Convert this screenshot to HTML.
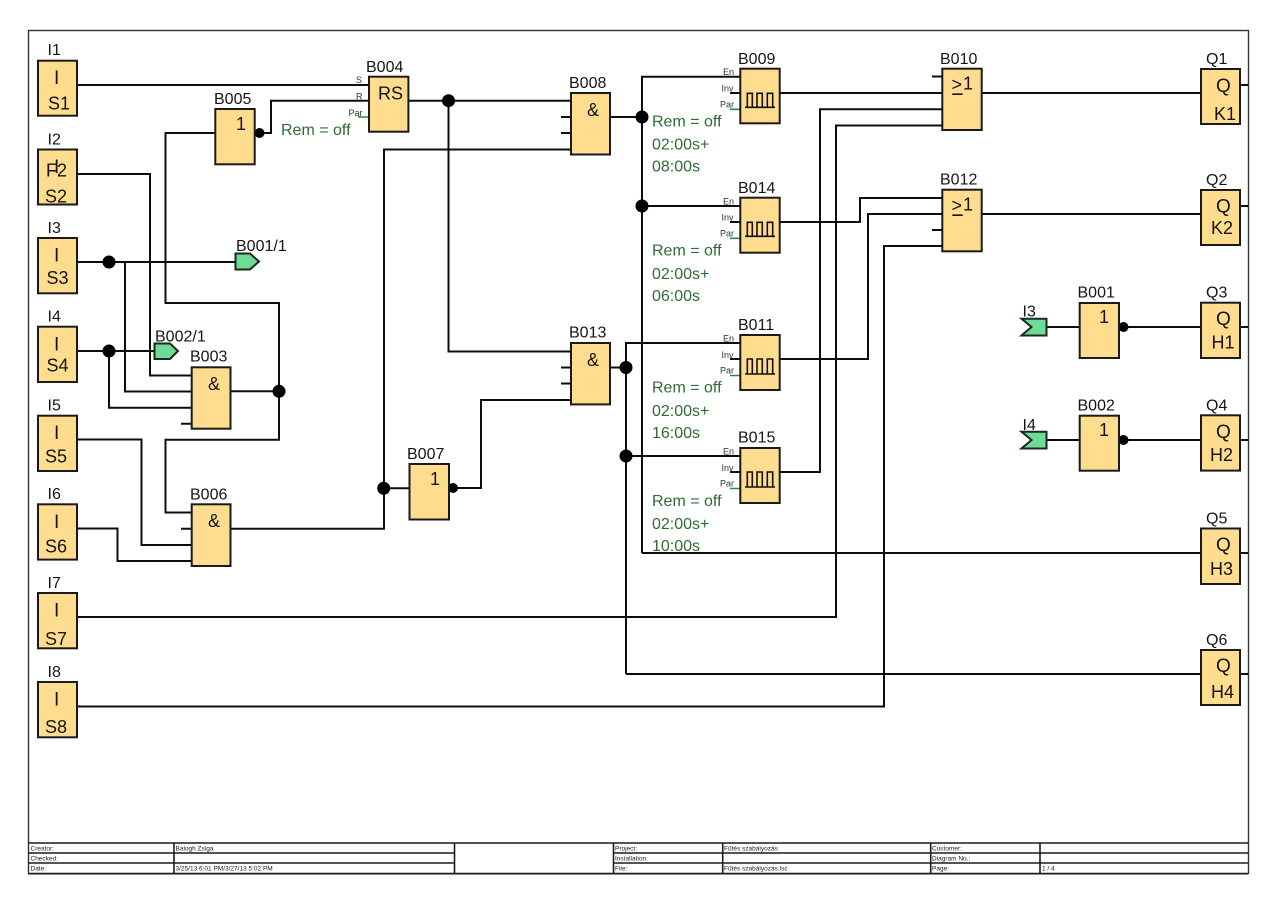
<!DOCTYPE html>
<html><head><meta charset="utf-8"><title>Diagram</title>
<style>
html,body{margin:0;padding:0;background:#fff}
svg{display:block}
text{font-family:"Liberation Sans",sans-serif;fill:#151515}
.l{font-size:16px}
.b{font-size:18px}
.n{font-size:19px}
.s{font-size:9px;fill:#333}
.r{font-size:16px;fill:#2f6b35}
.t{font-size:6.5px;fill:#222}
.w{fill:none;stroke:#0d0d0d;stroke-width:2}
.g{fill:none;stroke:#2f8a3a;stroke-width:1.6}
.box{fill:#ffdc8e;stroke:#1a1a1a;stroke-width:2}
.f{fill:#6fdb96;stroke:#1a2a1a;stroke-width:2}
.p{fill:none;stroke:#111;stroke-width:1.6}
</style></head><body>
<svg xmlns="http://www.w3.org/2000/svg" width="1280" height="906" viewBox="0 0 1280 906">
<rect width="1280" height="906" fill="#fff"/>
<rect x="28.5" y="30.5" width="1220" height="843" fill="none" stroke="#333" stroke-width="1.4"/>

<!-- wires -->
<path class="w" d="M77 85H369M254 133H271V100.7H369M215 133H165.5V303H279V439.7H165.5V512.5H192M230 391.3H279"/>
<path class="w" d="M77 174H150V375.5H192M77 262H235M125 262V391.5H192M77 351H154M109 351V407.7H192M181 423.7H192"/>
<path class="w" d="M77 439.5H141.5V545H192M77 528.5H117.5V561H192M181 528.7H192M230 528.7H384V149.5H571M384 488.3H410"/>
<path class="w" d="M449 488H481V400H571M408 100.7H571M448.5 100.7V351.5H571M561 117H571M561 133H571M610 117H642M642 553V76.7H740M642 206H740M642 553H1201"/>
<path class="w" d="M561 367.5H571M561 383.5H571M610 367.5H626M626 674V343H740M626 456H740M626 674H1201"/>
<path class="w" d="M780 93H942M932 76.5H942M780 472H820V109.3H942M77 617H836V125.5H942M981 93H1201M780 222H860V198H942M780 359H868V214H942M932 230H942M77 706.5H884V246H942M981 214H1201"/>
<path class="w" d="M1047 327H1080M1119 327H1201M1047 440H1080M1119 440H1201"/>
<path class="w" d="M1240 85H1248M1240 206H1248M1240 327H1248M1240 440H1248M1240 553H1248M1240 674H1248"/>
<path class="w" d="M730 93H740M730 222H740M730 359H740M730 472H740"/>
<path class="g" d="M358 117H369M730 109.3H740M730 238.3H740M730 375.5H740M730 488.5H740"/>

<!-- junctions -->
<g fill="#000">
<circle cx="109" cy="262" r="6.5"/><circle cx="109" cy="351" r="6.5"/><circle cx="279" cy="391.3" r="6.5"/>
<circle cx="383.7" cy="488.3" r="6.5"/><circle cx="448.5" cy="100.7" r="6.5"/><circle cx="642" cy="117" r="6.5"/>
<circle cx="642" cy="206" r="6.5"/><circle cx="626" cy="367.5" r="6.5"/><circle cx="626" cy="456" r="6.5"/>
<circle cx="259.5" cy="133" r="5"/><circle cx="453" cy="488" r="5"/><circle cx="1123.5" cy="327" r="5"/><circle cx="1123.5" cy="440" r="5"/>
</g>

<!-- input blocks -->
<rect class="box" x="38" y="60.7" width="39" height="55"/>
<rect class="box" x="38" y="149.5" width="39" height="55"/>
<rect class="box" x="38" y="238" width="39" height="55.3"/>
<rect class="box" x="38" y="326.7" width="39" height="55.3"/>
<rect class="box" x="38" y="415.7" width="39" height="55.3"/>
<rect class="box" x="38" y="504.3" width="39" height="55.3"/>
<rect class="box" x="38" y="593" width="39" height="55.3"/>
<rect class="box" x="38" y="682" width="39" height="55.3"/>

<text class="l" x="47.5" y="55">I1</text><text class="n" x="54" y="84">I</text><text class="b" x="48" y="109.3">S1</text>
<text class="l" x="47.5" y="144.3">I2</text><text class="n" x="54" y="173">I</text><text class="b" x="46" y="176.7">F2</text><text class="b" x="45" y="202.7">S2</text>
<text class="l" x="47.5" y="233">I3</text><text class="n" x="54" y="261.5">I</text><text class="b" x="46.5" y="284">S3</text>
<text class="l" x="47.5" y="321.5">I4</text><text class="n" x="54" y="350.5">I</text><text class="b" x="46.5" y="371.7">S4</text>
<text class="l" x="47.5" y="410.5">I5</text><text class="n" x="54" y="439">I</text><text class="b" x="45" y="462.3">S5</text>
<text class="l" x="47.5" y="499">I6</text><text class="n" x="54" y="528">I</text><text class="b" x="45" y="552.3">S6</text>
<text class="l" x="47.5" y="588">I7</text><text class="n" x="54" y="616.5">I</text><text class="b" x="45" y="645">S7</text>
<text class="l" x="47.5" y="677">I8</text><text class="n" x="54" y="705.5">I</text><text class="b" x="45" y="733">S8</text>

<!-- logic blocks -->
<rect class="box" x="215.3" y="109" width="39.4" height="55.3"/>
<rect class="box" x="369" y="76.7" width="39.4" height="55"/>
<rect class="box" x="191.7" y="367.3" width="38.8" height="61.4"/>
<rect class="box" x="191.7" y="504.3" width="38.8" height="61.7"/>
<rect class="box" x="409.5" y="464" width="39.5" height="55.5"/>
<rect class="box" x="571" y="93" width="39" height="61.5"/>
<rect class="box" x="571" y="343" width="39" height="61.4"/>
<rect class="box" x="740.3" y="68.7" width="39.4" height="54.6"/>
<rect class="box" x="740.3" y="197.7" width="39.4" height="55"/>
<rect class="box" x="740.3" y="335" width="39.4" height="55"/>
<rect class="box" x="740.3" y="448" width="39.4" height="55"/>
<rect class="box" x="942.3" y="68.7" width="39.4" height="61.3"/>
<rect class="box" x="942.3" y="189.7" width="39.4" height="61.6"/>
<rect class="box" x="1079.7" y="303" width="39.3" height="55"/>
<rect class="box" x="1079.7" y="415.7" width="39.3" height="55"/>

<rect class="box" x="1201" y="69" width="39" height="55"/>
<rect class="box" x="1201" y="190" width="39" height="55"/>
<rect class="box" x="1201" y="302.7" width="39" height="55.3"/>
<rect class="box" x="1201" y="415.3" width="39" height="55.3"/>
<rect class="box" x="1201" y="528.5" width="39" height="55.5"/>
<rect class="box" x="1201" y="650" width="39" height="55"/>

<!-- pulse symbols -->
<path class="p" d="M745 107.3H747.3V93.3H752.3V107.3H757V93.3H762.3V107.3H767.3V93.3H772.7V107.3H775M747.3 107.3H775"/>
<path class="p" d="M745 236.3H747.3V222.3H752.3V236.3H757V222.3H762.3V236.3H767.3V222.3H772.7V236.3H775M747.3 236.3H775"/>
<path class="p" d="M745 374H747.3V359H752.3V374H757V359H762.3V374H767.3V359H772.7V374H775M747.3 374H775"/>
<path class="p" d="M745 487H747.3V472H752.3V487H757V472H762.3V487H767.3V472H772.7V487H775M747.3 487H775"/>

<!-- flags -->
<polygon class="f" points="235.5,253.5 250,253.5 259,261.5 250,269.5 235.5,269.5"/>
<polygon class="f" points="154.5,343.5 170,343.5 178,351 170,359 154.5,359"/>
<polygon class="f" points="1021.5,318.7 1046.5,318.7 1046.5,335.5 1021.5,335.5 1031.5,327"/>
<polygon class="f" points="1021.5,431.7 1046.5,431.7 1046.5,448.5 1021.5,448.5 1031.5,440"/>

<!-- labels -->
<text class="l" x="236" y="251">B001/1</text>
<text class="l" x="155" y="341.7">B002/1</text>
<text class="l" x="1022.5" y="316.7">I3</text>
<text class="l" x="1022.5" y="430">I4</text>
<text class="l" x="214" y="104">B005</text>
<text class="l" x="366" y="72">B004</text>
<text class="l" x="190" y="361.7">B003</text>
<text class="l" x="190" y="499.3">B006</text>
<text class="l" x="407" y="459">B007</text>
<text class="l" x="569" y="88">B008</text>
<text class="l" x="569" y="337.7">B013</text>
<text class="l" x="738" y="64">B009</text>
<text class="l" x="738" y="193">B014</text>
<text class="l" x="738" y="330">B011</text>
<text class="l" x="738" y="442.7">B015</text>
<text class="l" x="940" y="64">B010</text>
<text class="l" x="940" y="184.3">B012</text>
<text class="l" x="1077.5" y="297.7">B001</text>
<text class="l" x="1077.5" y="410.5">B002</text>
<text class="l" x="1206" y="64">Q1</text>
<text class="l" x="1206" y="185">Q2</text>
<text class="l" x="1206" y="297.7">Q3</text>
<text class="l" x="1206" y="410.5">Q4</text>
<text class="l" x="1206" y="523.5">Q5</text>
<text class="l" x="1206" y="645">Q6</text>

<!-- block symbols -->
<text class="b" x="236" y="130">1</text>
<text class="b" x="378" y="99.3">RS</text>
<text class="b" x="208" y="390">&amp;</text>
<text class="b" x="208" y="527">&amp;</text>
<text class="b" x="430" y="485">1</text>
<text class="b" x="587" y="116">&amp;</text>
<text class="b" x="587" y="366">&amp;</text>
<text class="b" x="951.5" y="90.7">&gt;</text><text class="b" x="963" y="89.3">1</text><path class="p" d="M952.3 94.2H962.7"/>
<text class="b" x="951.5" y="211.7">&gt;</text><text class="b" x="963" y="210.3">1</text><path class="p" d="M952.3 215.2H962.7"/>
<text class="b" x="1099" y="323">1</text>
<text class="b" x="1099" y="436">1</text>
<text class="n" x="1216" y="92">Q</text><text class="b" x="1214" y="120">K1</text>
<text class="n" x="1216" y="212.5">Q</text><text class="b" x="1211" y="234">K2</text>
<text class="n" x="1216" y="325">Q</text><text class="b" x="1211.5" y="348.3">H1</text>
<text class="n" x="1216" y="438">Q</text><text class="b" x="1210" y="461">H2</text>
<text class="n" x="1216" y="551">Q</text><text class="b" x="1210" y="575">H3</text>
<text class="n" x="1216" y="672">Q</text><text class="b" x="1211" y="698">H4</text>

<!-- small pin labels -->
<text class="s" x="356" y="83">S</text><text class="s" x="356" y="99.3">R</text><text class="s" x="348.5" y="116">Par</text>
<text class="s" x="723" y="75">En</text><text class="s" x="721.5" y="91.7">Inv</text><text class="s" x="720" y="107.3">Par</text>
<text class="s" x="723" y="204.3">En</text><text class="s" x="721.5" y="220.7">Inv</text><text class="s" x="720" y="236.3">Par</text>
<text class="s" x="723" y="341.5">En</text><text class="s" x="721.5" y="358">Inv</text><text class="s" x="720" y="373.5">Par</text>
<text class="s" x="723" y="454.5">En</text><text class="s" x="721.5" y="471">Inv</text><text class="s" x="720" y="486.5">Par</text>

<!-- remarks -->
<text class="r" x="281" y="135">Rem = off</text>
<text class="r" x="652" y="126.7">Rem = off</text><text class="r" x="652" y="149.3">02:00s+</text><text class="r" x="652" y="171.3">08:00s</text>
<text class="r" x="652" y="255.5">Rem = off</text><text class="r" x="652" y="279">02:00s+</text><text class="r" x="652" y="301">06:00s</text>
<text class="r" x="652" y="392.7">Rem = off</text><text class="r" x="652" y="416">02:00s+</text><text class="r" x="652" y="438">16:00s</text>
<text class="r" x="652" y="506">Rem = off</text><text class="r" x="652" y="529">02:00s+</text><text class="r" x="652" y="551">10:00s</text>

<!-- title block -->
<path fill="none" stroke="#1c1c1c" stroke-width="1.6" d="M28 843H1248M28 873.7H1248M28 853H454.5M613.5 853H1248M28 863H454.5M613.5 863H1248M174 843V874M454.5 843V874M613.5 843V874M722.7 843V874M930.7 843V874M1040 843V874"/>
<text class="t" x="30.5" y="850.5">Creator:</text><text class="t" x="175.5" y="850.5">Balogh Zsiga</text>
<text class="t" x="30.5" y="860.5">Checked:</text>
<text class="t" x="30.5" y="870.5">Date:</text><text class="t" x="175.5" y="870.5">3/25/13 6:01 PM/3/27/13 5:02 PM</text>
<text class="t" x="615" y="850.5">Project:</text><text class="t" x="724" y="850.5">Fűtés szabályozás</text>
<text class="t" x="615" y="860.5">Installation:</text>
<text class="t" x="615" y="870.5">File:</text><text class="t" x="724" y="870.5">Fűtés szabályozás.lsc</text>
<text class="t" x="932" y="850.5">Customer:</text>
<text class="t" x="932" y="860.5">Diagram No.:</text>
<text class="t" x="932" y="870.5">Page:</text><text class="t" x="1042" y="870.5">1 / 4</text>
</svg>
</body></html>
